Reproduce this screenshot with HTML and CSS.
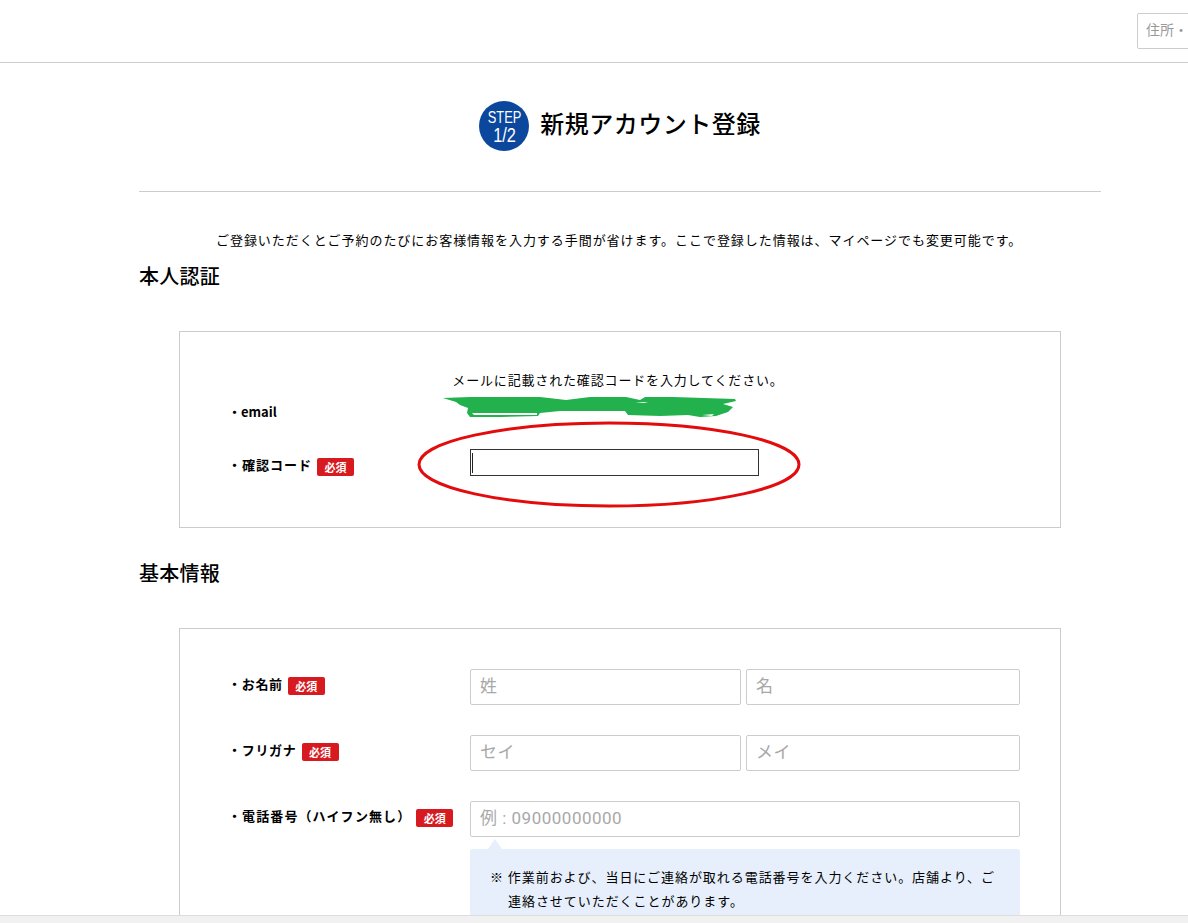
FILE: index.html
```html
<!DOCTYPE html>
<html lang="ja">
<head>
<meta charset="utf-8">
<title>新規アカウント登録</title>
<link rel="stylesheet" href="styles.css">
</head>
<body>
<header class="top">
  <input class="search" type="text" placeholder="住所・駅名">
</header>
<main class="page">
  <div class="title">
    <div class="step"><span class="step-a">STEP</span><span class="step-b">1/2</span></div>
    <h1>新規アカウント登録</h1>
  </div>
  <p class="intro">ご登録いただくとご予約のたびにお客様情報を入力する手間が省けます。ここで登録した情報は、マイページでも変更可能です。</p>
  <h2 class="sec sec-first">本人認証</h2>
  <section class="card card-auth">
    <p class="msg">メールに記載された確認コードを入力してください。</p>
    <div class="row row-email"><div class="label">・email</div></div>
    <div class="row row-code">
      <div class="label label-wide">・確認コード<span class="req">必須</span></div>
      <div class="code"><span class="caret"></span></div>
    </div>
  </section>
  <h2 class="sec">基本情報</h2>
  <section class="card card-basic">
    <div class="row">
      <div class="label">・お名前<span class="req">必須</span></div>
      <div class="pair"><input class="inp inp-a" placeholder="姓"><input class="inp inp-b" placeholder="名"></div>
    </div>
    <div class="row">
      <div class="label label-kana">・フリガナ<span class="req">必須</span></div>
      <div class="pair"><input class="inp inp-a" placeholder="セイ"><input class="inp inp-b" placeholder="メイ"></div>
    </div>
    <div class="row row-tel">
      <div class="label label-wide">・電話番号（ハイフン無し）<span class="req">必須</span></div>
      <div class="pair"><input class="inp inp-full" placeholder="例 : 09000000000"></div>
    </div>
    <div class="hint">
      <p>※ 作業前および、当日にご連絡が取れる電話番号を入力ください。店舗より、ご連絡させていただくことがあります。</p>
    </div>
  </section>
</main>
<svg class="marks" width="1188" height="923" viewBox="0 0 1188 923" aria-hidden="true">
  <path class="green" d="M443 398 L470 397 L500 397 L540 397 L566 400 L590 397 L626 397 L640 400 L645 397 L673 397 L735 399 L736 401 L723 404 L733 407 L730 410 L728 412 L716 416 L700 417 L688 415 L660 416 L628 415 L625 411 L590 411 L560 411 L540 413 L538 416 L500 417 L470 417 L467 413 L468 408 L460 405 L456 402 Z"/>
  <path class="white" d="M472 413 L537 413 L537 415 L474 415 Z M635 402 L648 402 L644 403 Z M702 415 L714 414 L712 416 Z"/>
  <ellipse class="red" cx="609" cy="464.500" rx="190" ry="41.500"/>
</svg>
<div class="bar"></div>
</body>
</html>
```
FILE: styles.css
```css
* { box-sizing: border-box; }
html, body { margin: 0; padding: 0; }
body {
  position: relative;
  width: 1188px;
  height: 923px;
  overflow: hidden;
  background: #fff;
  color: #000;
  font-family: "Noto Sans CJK JP", "Liberation Sans", sans-serif;
}
.top {
  height: 63px;
  border-bottom: 1px solid #ccc;
  padding: 13px 0 0 1137px;
  overflow: hidden;
  display: flex;
  align-items: flex-start;
}
.search {
  flex: none;
  width: 200px;
  height: 36px;
  border: 1px solid #ccc;
  border-radius: 2px;
  padding: 0 8px 4px;
  font: 14px "Noto Sans CJK JP", sans-serif;
}
.search::placeholder { color: #999; opacity: 1; }
.page { width: 962px; margin-left: 139px; }
.title {
  height: 129px;
  padding-top: 38px;
  border-bottom: 1px solid #ccc;
  display: flex;
  justify-content: center;
  align-items: flex-start;
  gap: 11px;
}
.step {
  width: 50px;
  height: 50px;
  border-radius: 50%;
  background: #0b479d;
  color: #fff;
  display: flex;
  flex-direction: column;
  align-items: center;
  justify-content: center;
  font-family: "Liberation Sans", sans-serif;
}
.step-a { font-size: 16.500px; line-height: 19px; transform: scaleX(0.78); }
.step-b { font-size: 19.500px; line-height: 19px; margin-top: -1px; transform: scaleX(0.84); }
.title h1 {
  margin: 0;
  font-size: 24px;
  font-weight: 500;
  line-height: 44px;
  letter-spacing: 0.5px;
}
.intro {
  margin: 38px 0 0;
  height: 20px;
  padding-left: 77px;
  font-size: 13px;
  line-height: 20px;
  letter-spacing: 0.95px;
  white-space: nowrap;
}
.sec {
  margin: 0;
  font-size: 20px;
  font-weight: 500;
  line-height: 30px;
  height: 30px;
  letter-spacing: 0.25px;
}
.sec-first { margin-top: 11px; }
.card {
  width: 882px;
  margin-left: 40px;
  border: 1px solid #ccc;
  padding: 0 40px 0 48px;
}
.card-auth { margin-top: 40px; height: 197px; margin-bottom: 30px; padding-top: 38px; }
.card-basic { margin-top: 40px; padding-top: 40px; }
.msg {
  margin: 0 0 0 -48px;
  width: 880px;
  text-align: center;
  padding-right: 4px;
  font-size: 13px;
  line-height: 20px;
  letter-spacing: 0.84px;
}
.row { display: flex; align-items: center; min-height: 36px; margin-bottom: 30px; }
.row-email { min-height: 20px; margin: 13px 0 0; }
.row-code { min-height: 27px; margin: 26px 0 0; }
.row-tel { margin-bottom: 12px; }
.label {
  flex: none;
  width: 242px;
  display: flex;
  align-items: center;
  font-size: 13px;
  font-weight: 700;
  line-height: 20px;
  letter-spacing: 0.7px;
  margin-top: -6px;
}
.row-email .label { margin-top: -2px; letter-spacing: 0; }
.row-code .label { margin-top: 5px; letter-spacing: 1px; }
.label-wide { letter-spacing: 1.1px; }
.label-kana { letter-spacing: 0.7px; }
.req {
  width: 37px;
  height: 18px;
  margin-left: 5px;
  margin-top: 3px;
  border-radius: 2px;
  background: #d71a20;
  color: #fff;
  font-size: 11px;
  line-height: 18px;
  letter-spacing: 0;
  text-align: center;
}
.code {
  width: 289px;
  height: 27px;
  border: 1px solid #333;
  padding: 3px 0 0 1px;
}
.caret { display: block; width: 1px; height: 20px; background: #222; }
.pair { display: flex; gap: 5px; }
.inp {
  height: 36px;
  border: 1px solid #ccc;
  border-radius: 2px;
  padding: 0 9px 2px;
  font: 17px Roboto, "Noto Sans CJK JP", sans-serif;
  letter-spacing: 0.5px;
}
.inp::placeholder { color: #a8a8a8; opacity: 1; }
.inp-a { width: 271px; }
.inp-b { width: 274px; }
.inp-full { width: 550px; }
.hint {
  position: relative;
  width: 550px;
  margin-left: 242px;
  padding: 16px 20px 20px 20px;
  border-radius: 2px;
  background: #e6effb;
}
.hint::before {
  content: "";
  position: absolute;
  left: 18px;
  top: -10px;
  border-left: 7px solid transparent;
  border-right: 7px solid transparent;
  border-bottom: 10px solid #e6effb;
}
.hint p {
  margin: 0;
  padding-left: 18px;
  text-indent: -18px;
  font-size: 13px;
  line-height: 24px;
  letter-spacing: 0.95px;
}
.marks { position: absolute; left: 0; top: 0; pointer-events: none; }
.green { fill: #22b14c; }
.white { fill: #fff; }
.red { fill: none; stroke: #e30b0b; stroke-width: 3; }
.bar {
  position: absolute;
  left: 0;
  right: 0;
  bottom: 0;
  height: 8px;
  background: #f1f1f1;
  border-top: 1px solid #ddd;
}
```
